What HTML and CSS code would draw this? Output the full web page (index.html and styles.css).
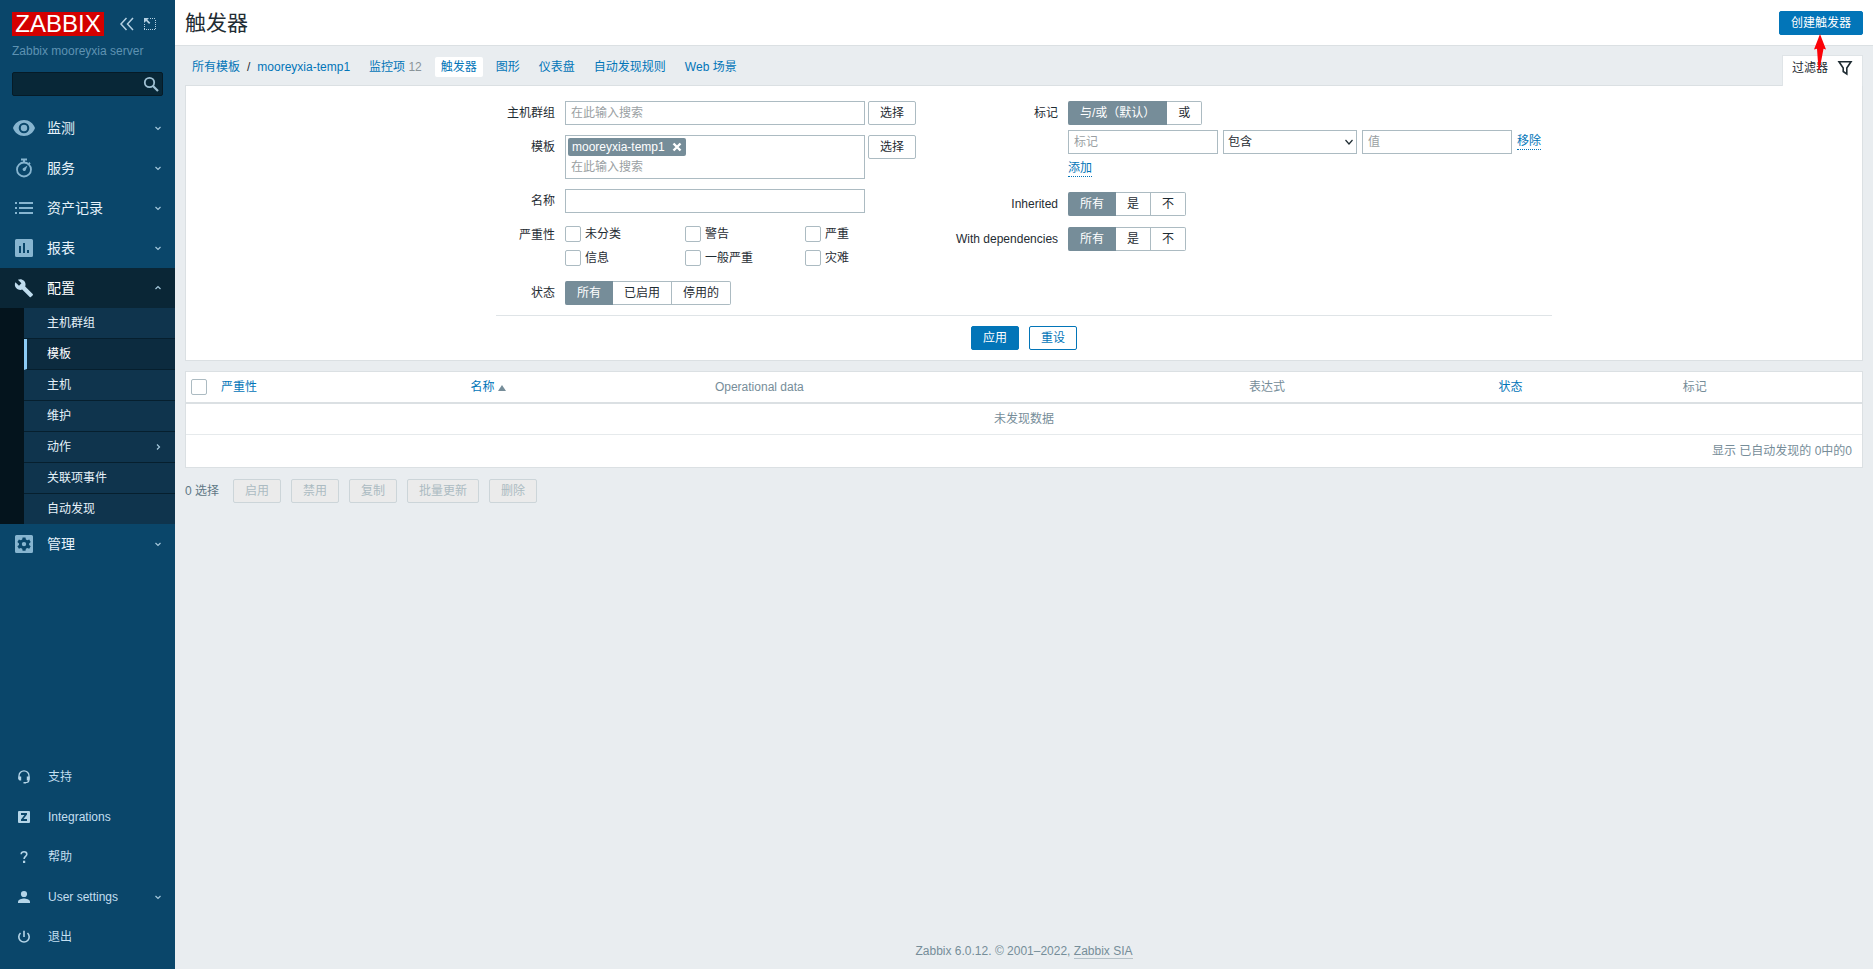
FILE: index.html
```html
<!DOCTYPE html>
<html lang="zh-CN">
<head>
<meta charset="utf-8">
<title>触发器</title>
<link rel="stylesheet" href="styles.css">
</head>
<body>
<svg class="defs" aria-hidden="true">
  <symbol id="chevron" viewBox="0 0 8 8"><path d="M1.500 3l2.500 2.500L6.500 3" fill="none" stroke="currentColor" stroke-width="1.200"/></symbol>
</svg>
<div class="layout">
  <aside class="sidebar">
    <div class="brand">
      <a class="logo" href="#">ZABBIX</a>
      <button class="icon-button" type="button" aria-label="收起侧边栏">
        <svg width="16" height="16" viewBox="0 0 16 16"><path d="M7.500 2L2 8l5.500 6M14 2L8.500 8l5.500 6" fill="none" stroke="currentColor" stroke-width="1.500"/></svg>
      </button>
      <button class="icon-button" type="button" aria-label="隐藏侧边栏">
        <svg width="14" height="14" viewBox="0 0 14 14"><path d="M7 1.500h6M12.500 3v10M12 12.500H1M1.500 12V7" fill="none" stroke="currentColor" stroke-width="1" stroke-dasharray="1 1"/><path d="M1 1h5L4.300 2.700l3 3-1.200 1.200-3-3L1 6z" fill="currentColor"/></svg>
      </button>
    </div>
    <div class="server">Zabbix mooreyxia server</div>
    <form class="search" role="search">
      <input type="text" aria-label="搜索">
      <button type="button" aria-label="搜索">
        <svg width="16" height="16" viewBox="0 0 16 16"><circle cx="6.500" cy="6.500" r="4.700" fill="none" stroke="currentColor" stroke-width="1.800"/><path d="M10 10l5 5" stroke="currentColor" stroke-width="2.200"/></svg>
      </button>
    </form>
    <nav class="menu">
      <a class="menu-item" href="#">
        <svg class="menu-icon" viewBox="0 0 24 24"><path fill-rule="evenodd" d="M12 4C7 4 2.700 7.200 1 12c1.700 4.800 6 8 11 8s9.300-3.200 11-8c-1.700-4.800-6-8-11-8zm0 13.300a5.300 5.300 0 1 1 0-10.600 5.300 5.300 0 0 1 0 10.600zm0-2.100a3.200 3.200 0 1 0 0-6.400 3.200 3.200 0 0 0 0 6.400z"/></svg>
        <span>监测</span><svg class="arrow"><use href="#chevron"/></svg>
      </a>
      <a class="menu-item" href="#">
        <svg class="menu-icon" viewBox="0 0 24 24"><circle cx="12" cy="13.500" r="7" fill="none" stroke="currentColor" stroke-width="1.800"/><path d="M9 2.500h6v2h-2V6h-2V4.500H9zM17.300 6l1.400 1.400-1.200 1.200-1.400-1.400zM15.500 9.500l-2 5a1.700 1.700 0 0 1-2.700-2z"/></svg>
        <span>服务</span><svg class="arrow"><use href="#chevron"/></svg>
      </a>
      <a class="menu-item" href="#">
        <svg class="menu-icon" viewBox="0 0 24 24"><path d="M3 6h2v2H3zM3 11h2v2H3zM3 16h2v2H3zM7 6h14v2H7zM7 11h14v2H7zM7 16h14v2H7z"/></svg>
        <span>资产记录</span><svg class="arrow"><use href="#chevron"/></svg>
      </a>
      <a class="menu-item" href="#">
        <svg class="menu-icon" viewBox="0 0 24 24"><path fill-rule="evenodd" d="M4.500 3h15A1.500 1.500 0 0 1 21 4.500v15a1.500 1.500 0 0 1-1.500 1.500h-15A1.500 1.500 0 0 1 3 19.500v-15A1.500 1.500 0 0 1 4.500 3zM7 10v7h2v-7zm4-3v10h2V7zm4 7v3h2v-3z"/></svg>
        <span>报表</span><svg class="arrow"><use href="#chevron"/></svg>
      </a>
      <a class="menu-item menu-open" href="#">
        <svg class="menu-icon" viewBox="0 0 24 24"><path d="M20.700 18.100l-7.500-7.500c.8-2 .3-4.200-1.200-5.800-1.700-1.600-4.100-2-6.100-1l3.500 3.400-2.400 2.500-3.600-3.500c-1 2-.6 4.500 1 6.100 1.600 1.600 3.900 2 5.800 1.300l7.500 7.500c.3.300.9.300 1.200 0l1.900-1.900c.3-.3.300-.9-.1-1.100z"/></svg>
        <span>配置</span><svg class="arrow arrow-up"><use href="#chevron"/></svg>
      </a>
      <div class="submenu">
        <a href="#">主机群组</a>
        <a class="current" href="#">模板</a>
        <a href="#">主机</a>
        <a href="#">维护</a>
        <a href="#"><span>动作</span><svg class="arrow arrow-right"><use href="#chevron"/></svg></a>
        <a href="#">关联项事件</a>
        <a href="#">自动发现</a>
      </div>
      <a class="menu-item" href="#">
        <svg class="menu-icon" viewBox="0 0 24 24"><path fill-rule="evenodd" d="M4.500 3h15A1.500 1.500 0 0 1 21 4.500v15a1.500 1.500 0 0 1-1.500 1.500h-15A1.500 1.500 0 0 1 3 19.500v-15A1.500 1.500 0 0 1 4.500 3zM10.600 5.500l-.4 2-1.400.8-1.900-.7-1.500 2.500L7 11.400v1.500l-1.600 1.300 1.500 2.500 1.900-.7 1.400.8.400 2h2.900l.4-2 1.400-.8 1.900.7 1.500-2.500-1.600-1.300v-1.500l1.600-1.300-1.500-2.500-1.900.7-1.400-.8-.4-2zM12 9.900a2.200 2.200 0 1 1 0 4.400 2.200 2.200 0 0 1 0-4.400z"/></svg>
        <span>管理</span><svg class="arrow"><use href="#chevron"/></svg>
      </a>
    </nav>
    <nav class="menu user-menu">
      <a class="menu-item" href="#">
        <svg class="menu-icon" viewBox="0 0 24 24"><path d="M7 14V10.800a5 5 0 0 1 10 0V14.500c0 2-1.500 3.200-4 3.200" fill="none" stroke="currentColor" stroke-width="1.300"/><path d="M6.400 11.500h2.800v4H7.800a1.400 1.400 0 0 1-1.400-1.400zM14.800 11.500h2.800v2.600a1.400 1.400 0 0 1-1.400 1.400h-1.400zM11.500 16.900h2.300v1.600h-2.300z"/></svg>
        <span>支持</span>
      </a>
      <a class="menu-item" href="#">
        <svg class="menu-icon" viewBox="0 0 24 24"><path fill-rule="evenodd" d="M7 6h10a1 1 0 0 1 1 1v10a1 1 0 0 1-1 1H7a1 1 0 0 1-1-1V7a1 1 0 0 1 1-1zM9 8v2h3.500L9 14.500V16h6v-2h-3.500L15 9.500V8z"/></svg>
        <span>Integrations</span>
      </a>
      <a class="menu-item" href="#">
        <svg class="menu-icon" viewBox="0 0 24 24"><path d="M9.200 9.300c0-1.700 1.200-2.600 2.800-2.600s2.800 1 2.800 2.500c0 2.100-2.700 2.300-2.700 4.800" fill="none" stroke="currentColor" stroke-width="1.600"/><path d="M11 15.700h2.200V18H11z"/></svg>
        <span>帮助</span>
      </a>
      <a class="menu-item" href="#">
        <svg class="menu-icon" viewBox="0 0 24 24"><circle cx="12" cy="9" r="3.100"/><path d="M6 18v-1.500c0-2 4-3.100 6-3.100s6 1.100 6 3.100V18z"/></svg>
        <span>User settings</span><svg class="arrow"><use href="#chevron"/></svg>
      </a>
      <a class="menu-item" href="#">
        <svg class="menu-icon" viewBox="0 0 24 24"><path d="M8.500 8a5.200 5.200 0 1 0 7 0M12 5.800v6.200" fill="none" stroke="currentColor" stroke-width="1.600"/></svg>
        <span>退出</span>
      </a>
    </nav>
  </aside>

  <div class="page">
    <header class="page-header">
      <h1>触发器</h1>
      <button class="button primary create" type="button">创建触发器</button>
      <svg class="pointer" width="12" height="36" viewBox="0 0 12 36" aria-hidden="true"><path d="M6 0l6 15.500-2.500-.8L5.500 36h-1L3 14.700l-3 .8z"/></svg>
    </header>
    <main class="content">
      <div class="nav-row">
        <nav class="crumbs">
          <a href="#">所有模板</a><span class="slash">/</span><a href="#">mooreyxia-temp1</a>
        </nav>
        <nav class="tabs">
          <span class="tab"><a href="#">监控项</a> <span class="count">12</span></span>
          <a class="tab tab-current" href="#">触发器</a>
          <a class="tab" href="#">图形</a>
          <a class="tab" href="#">仪表盘</a>
          <a class="tab" href="#">自动发现规则</a>
          <a class="tab" href="#">Web 场景</a>
        </nav>
        <button class="filter-tab" type="button">过滤器
          <svg width="16" height="16" viewBox="0 0 16 16"><path d="M2 1.800h12L9.800 8v6L6.200 11.500V8z" fill="none" stroke="currentColor" stroke-width="1.600"/></svg>
        </button>
      </div>

      <form class="filter">
        <div class="filter-form">
          <div class="fields fields-left">
            <label for="groups">主机群组</label>
            <div class="pick"><input class="text" id="groups" type="text" placeholder="在此输入搜索"><button class="button plain" type="button">选择</button></div>
            <label for="templates">模板</label>
            <div class="pick">
              <div class="multiselect">
                <span class="token">mooreyxia-temp1<button type="button" aria-label="移除 mooreyxia-temp1"><svg width="10" height="10" viewBox="0 0 10 10"><path d="M1.500 1.500l7 7M8.500 1.500l-7 7" stroke="currentColor" stroke-width="2.400"/></svg></button></span>
                <input id="templates" type="text" placeholder="在此输入搜索">
              </div>
              <button class="button plain" type="button">选择</button>
            </div>
            <label for="name">名称</label>
            <div class="pick"><input class="text" id="name" type="text"></div>
            <span class="label">严重性</span>
            <div class="checks">
              <label><input type="checkbox">未分类</label>
              <label><input type="checkbox">警告</label>
              <label><input type="checkbox">严重</label>
              <label><input type="checkbox">信息</label>
              <label><input type="checkbox">一般严重</label>
              <label><input type="checkbox">灾难</label>
            </div>
            <span class="label">状态</span>
            <div class="segments">
              <label><input type="radio" name="state" checked><span>所有</span></label>
              <label><input type="radio" name="state"><span>已启用</span></label>
              <label><input type="radio" name="state"><span>停用的</span></label>
            </div>
          </div>
          <div class="fields fields-right">
            <span class="label">标记</span>
            <div class="tags">
              <div class="segments">
                <label><input type="radio" name="evaltype" checked><span>与/或（默认）</span></label>
                <label><input type="radio" name="evaltype"><span>或</span></label>
              </div>
              <div class="tag-row">
                <input class="text" type="text" placeholder="标记" aria-label="标记">
                <div class="select-box">
                  <select aria-label="运算符"><option>包含</option></select>
                  <svg class="select-arrow" width="10" height="10" viewBox="0 0 10 10" aria-hidden="true"><path d="M1.500 3L5 7l3.500-4" fill="none" stroke="currentColor" stroke-width="1.200"/></svg>
                </div>
                <input class="text" type="text" placeholder="值" aria-label="值">
                <button class="link-button" type="button">移除</button>
              </div>
              <div class="add-row"><button class="link-button" type="button">添加</button></div>
            </div>
            <span class="label">Inherited</span>
            <div class="segments">
              <label><input type="radio" name="inherited" checked><span>所有</span></label>
              <label><input type="radio" name="inherited"><span>是</span></label>
              <label><input type="radio" name="inherited"><span>不</span></label>
            </div>
            <span class="label">With dependencies</span>
            <div class="segments">
              <label><input type="radio" name="deps" checked><span>所有</span></label>
              <label><input type="radio" name="deps"><span>是</span></label>
              <label><input type="radio" name="deps"><span>不</span></label>
            </div>
          </div>
        </div>
        <div class="filter-buttons">
          <button class="button primary" type="button">应用</button>
          <button class="button outline" type="button">重设</button>
        </div>
      </form>

      <table class="list">
        <colgroup><col class="c-check"><col class="c-severity"><col class="c-name"><col class="c-data"><col class="c-status"><col class="c-tags"><col class="c-tags"></colgroup>
        <thead>
          <tr>
            <th><input type="checkbox" aria-label="全选"></th>
            <th><a href="#">严重性</a></th>
            <th><a href="#">名称<span class="sort"></span></a></th>
            <th>Operational data</th>
            <th>表达式</th>
            <th><a href="#">状态</a></th>
            <th>标记</th>
          </tr>
        </thead>
        <tbody>
          <tr><td class="empty" colspan="7">未发现数据</td></tr>
          <tr><td class="total" colspan="7">显示 已自动发现的 0中的0</td></tr>
        </tbody>
      </table>

      <div class="actions">
        <span class="selected">0 选择</span>
        <button class="button" type="button" disabled>启用</button>
        <button class="button" type="button" disabled>禁用</button>
        <button class="button" type="button" disabled>复制</button>
        <button class="button" type="button" disabled>批量更新</button>
        <button class="button" type="button" disabled>删除</button>
      </div>
    </main>
    <footer class="footer">Zabbix 6.0.12. © 2001–2022, <a href="#">Zabbix SIA</a></footer>
  </div>
</div>
</body>
</html>
```

FILE: styles.css
```css
*,
*::before,
*::after {
  box-sizing: border-box;
}

body {
  margin: 0;
  background: #e9edf0;
  color: #1f2c33;
  font: 12px/16px "Liberation Sans", "Noto Sans CJK SC", sans-serif;
}

a {
  color: #0275b8;
  text-decoration: none;
}

button,
input,
select {
  font: inherit;
  color: inherit;
}

button {
  padding: 0;
  border: 0;
  background: none;
}

.defs {
  display: none;
}

.layout {
  display: flex;
  min-height: 100vh;
}

/* Sidebar */

.sidebar {
  display: flex;
  flex-direction: column;
  flex: 0 0 175px;
  min-width: 0;
  padding-bottom: 12px;
  background: #0a466a;
}

.brand {
  display: flex;
  align-items: center;
  padding: 12px 12px 0;
}

.logo {
  flex: none;
  width: 92px;
  height: 24px;
  margin-right: 15px;
  background: #d40000;
  color: #fff;
  font-size: 24px;
  line-height: 24px;
  text-align: center;
}

.icon-button {
  display: flex;
  flex: none;
  color: #b4d0e2;
}

.icon-button + .icon-button {
  margin-left: 8px;
}

.server {
  padding: 7px 12px 0;
  color: #5e92b2;
}

.search {
  display: flex;
  align-items: center;
  height: 24px;
  margin: 13px 12px 12px;
  padding-right: 3px;
  border: 1px solid #061b27;
  border-radius: 2px;
  background: #082737;
}

.search input {
  flex: 1;
  width: 0;
  min-width: 0;
  height: 20px;
  padding: 0 4px;
  border: 0;
  background: none;
  color: #fff;
}

.search button {
  display: flex;
  color: #9fc0d3;
}

.menu-item {
  display: flex;
  align-items: center;
  height: 40px;
  padding: 0 12px;
  color: #e6f2fa;
  font-size: 14px;
}

.menu-item span,
.submenu span {
  flex: 1;
}

.menu-icon {
  flex: none;
  width: 24px;
  height: 24px;
  margin-right: 11px;
  color: #87b5d0;
  fill: currentColor;
}

.menu-open {
  background: #0a2636;
  color: #fff;
}

.menu-open .menu-icon {
  color: #bfdcee;
}

.arrow {
  width: 8px;
  height: 8px;
  margin-right: 1px;
  color: #a5c8dc;
}

.arrow-up {
  transform: rotate(180deg);
}

.arrow-right {
  transform: rotate(-90deg);
}

.submenu {
  border-left: 24px solid #04141d;
  background: #0f344d;
}

.submenu a {
  display: flex;
  align-items: center;
  height: 31px;
  padding: 0 12px 0 23px;
  border-bottom: 1px solid #061f2e;
  color: #e6f2fa;
}

.submenu a:last-child {
  height: 30px;
  border-bottom: 0;
}

.submenu .current {
  padding-left: 20px;
  border-left: 3px solid #8ccbf5;
  background: #0c2b3f;
  color: #fff;
}

.user-menu {
  margin-top: auto;
}

.user-menu .menu-item {
  color: #c3dff0;
  font-size: 12px;
}

.user-menu .menu-icon {
  margin-right: 12px;
  color: #b5d5e8;
}

/* Page frame */

.page {
  display: flex;
  flex: 1;
  flex-direction: column;
  min-width: 0;
}

.page-header {
  position: relative;
  display: flex;
  align-items: center;
  justify-content: space-between;
  height: 46px;
  padding: 0 10px;
  border-bottom: 1px solid #dbe0e3;
  background: #fff;
}

h1 {
  margin: 0;
  font-size: 21px;
  font-weight: 400;
  line-height: 28px;
}

.pointer {
  position: absolute;
  top: 34px;
  right: 47px;
  z-index: 2;
  fill: #fb0207;
}

.content {
  flex: 1;
  padding: 0 10px;
}

.footer {
  padding: 10px;
  color: #768d99;
  text-align: center;
}

.footer a {
  border-bottom: 1px solid #b5c1c8;
  color: #768d99;
}

/* Controls */

.button {
  height: 24px;
  padding: 0 11px;
  border: 1px solid #acbbc2;
  border-radius: 2px;
  line-height: 22px;
  white-space: nowrap;
}

.primary {
  border-color: #0275b8;
  background: #0275b8;
  color: #fff;
}

.outline {
  border-color: #0275b8;
  background: #fff;
  color: #0275b8;
}

.plain {
  background: #fff;
}

.button:disabled {
  border-color: #ccd5d9;
  background: #ebebeb;
  color: #acbbc2;
}

.text {
  width: 150px;
  height: 24px;
  padding: 0 5px;
  border: 1px solid #acbbc2;
  background: #fff;
}

::placeholder {
  color: #9a9fa3;
  opacity: 1;
}

input[type="checkbox"] {
  flex: none;
  width: 16px;
  height: 16px;
  margin: 0;
  border: 1px solid #acbbc2;
  border-radius: 2px;
  appearance: none;
  background: #fff;
}

.segments {
  display: flex;
}

.segments input {
  position: absolute;
  margin: 0;
  opacity: 0;
}

.segments span {
  display: block;
  height: 24px;
  padding: 0 11px;
  border: solid #acbbc2;
  border-width: 1px 1px 1px 0;
  background: #fff;
  line-height: 22px;
}

.segments label:first-child span {
  padding-left: 12px;
  border-radius: 2px 0 0 2px;
}

.segments label:last-child span {
  border-radius: 0 2px 2px 0;
}

.segments input:checked + span {
  border-color: #768d99;
  background: #768d99;
  color: #fff;
}

.link-button {
  height: 16px;
  border-bottom: 1px dotted #0275b8;
  color: #0275b8;
  line-height: 15px;
}

/* Breadcrumbs and tabs */

.nav-row {
  display: flex;
  align-items: center;
  height: 39px;
  padding-left: 7px;
}

.crumbs {
  margin: 3px 13px 0 0;
}

.slash {
  margin: 0 7px;
}

.tabs {
  display: flex;
  gap: 7px;
  margin-top: 3px;
}

.tab {
  padding: 2px 6px;
  border-radius: 2px;
}

.tab-current {
  background: #fff;
}

.count {
  color: #8a9499;
}

.filter-tab {
  display: flex;
  align-items: center;
  align-self: flex-end;
  gap: 9px;
  height: 31px;
  margin: 0 0 -1px auto;
  padding: 0 9px 6px;
  border: 1px solid #dfe4e7;
  border-bottom: 0;
  background: #fff;
  z-index: 1;
}

/* Filter */

.filter {
  padding-bottom: 10px;
  border: 1px solid #dbe0e3;
  background: #fff;
}

.filter-form {
  display: flex;
  gap: 40px;
  width: fit-content;
  margin: 0 auto;
  padding: 15px 11px 10px;
  border-bottom: 1px solid #dfe4e7;
}

.fields {
  display: grid;
  align-content: start;
  column-gap: 10px;
  row-gap: 10px;
}

.fields > label,
.label {
  line-height: 24px;
  text-align: right;
  white-space: nowrap;
}

.fields-left {
  grid-template-columns: 48px 351px;
}

.fields-right {
  grid-template-columns: 102px 473px;
  row-gap: 11px;
}

.pick {
  display: flex;
  align-items: flex-start;
  gap: 3px;
}

.pick .text,
.multiselect {
  width: 300px;
}

.multiselect {
  padding: 2px;
  border: 1px solid #acbbc2;
}

.multiselect input {
  display: block;
  width: 100%;
  height: 20px;
  padding: 2px 3px 0;
  border: 0;
  background: none;
}

.token {
  display: flex;
  align-items: center;
  gap: 7px;
  width: fit-content;
  height: 18px;
  padding: 0 4px;
  border-radius: 2px;
  background: #768d99;
  color: #fff;
}

.token button {
  display: flex;
}

.checks {
  display: grid;
  grid-template-columns: repeat(3, 120px);
  row-gap: 4px;
  padding: 1px 0 3px;
}

.checks label {
  display: flex;
  align-items: center;
  gap: 4px;
  height: 20px;
}

.tag-row {
  display: flex;
  align-items: center;
  gap: 5px;
  margin-top: 5px;
}

.select-box {
  position: relative;
  width: 134px;
}

.select-box select {
  display: block;
  width: 100%;
  height: 24px;
  padding: 0 4px;
  border: 1px solid #acbbc2;
  border-radius: 0;
  appearance: none;
  background: #fff;
}

.select-arrow {
  position: absolute;
  top: 7px;
  right: 3px;
  pointer-events: none;
}

.add-row {
  display: flex;
  padding: 7px 0 4px;
}

.filter-buttons {
  display: flex;
  justify-content: center;
  gap: 10px;
  padding-top: 10px;
}

/* Trigger list */

.list {
  width: 100%;
  margin-top: 10px;
  border: 1px solid #dbe0e3;
  border-spacing: 0;
  background: #fff;
  color: #768d99;
  table-layout: fixed;
}

.c-check { width: 30px; }
.c-severity { width: 14.9%; }
.c-name { width: 14.6%; }
.c-data { width: 31.9%; }
.c-status { width: 14.9%; }
.c-tags { width: 11%; }

th {
  height: 32px;
  padding: 0 5px;
  border-bottom: 2px solid #dbe0e3;
  font-weight: 400;
  text-align: left;
}

th input[type="checkbox"] {
  display: block;
}

.sort {
  display: inline-block;
  margin-left: 3px;
  border: solid transparent;
  border-width: 0 4px 6px;
  border-bottom-color: #768d99;
}

td {
  height: 31px;
  padding: 0 10px;
}

.empty {
  border-bottom: 1px solid #e6eaec;
  text-align: center;
}

.total {
  height: 32px;
  text-align: right;
}

.actions {
  display: flex;
  align-items: center;
  gap: 10px;
  margin-top: 11px;
}

.selected {
  margin-right: 4px;
  color: #5f7885;
}
```
